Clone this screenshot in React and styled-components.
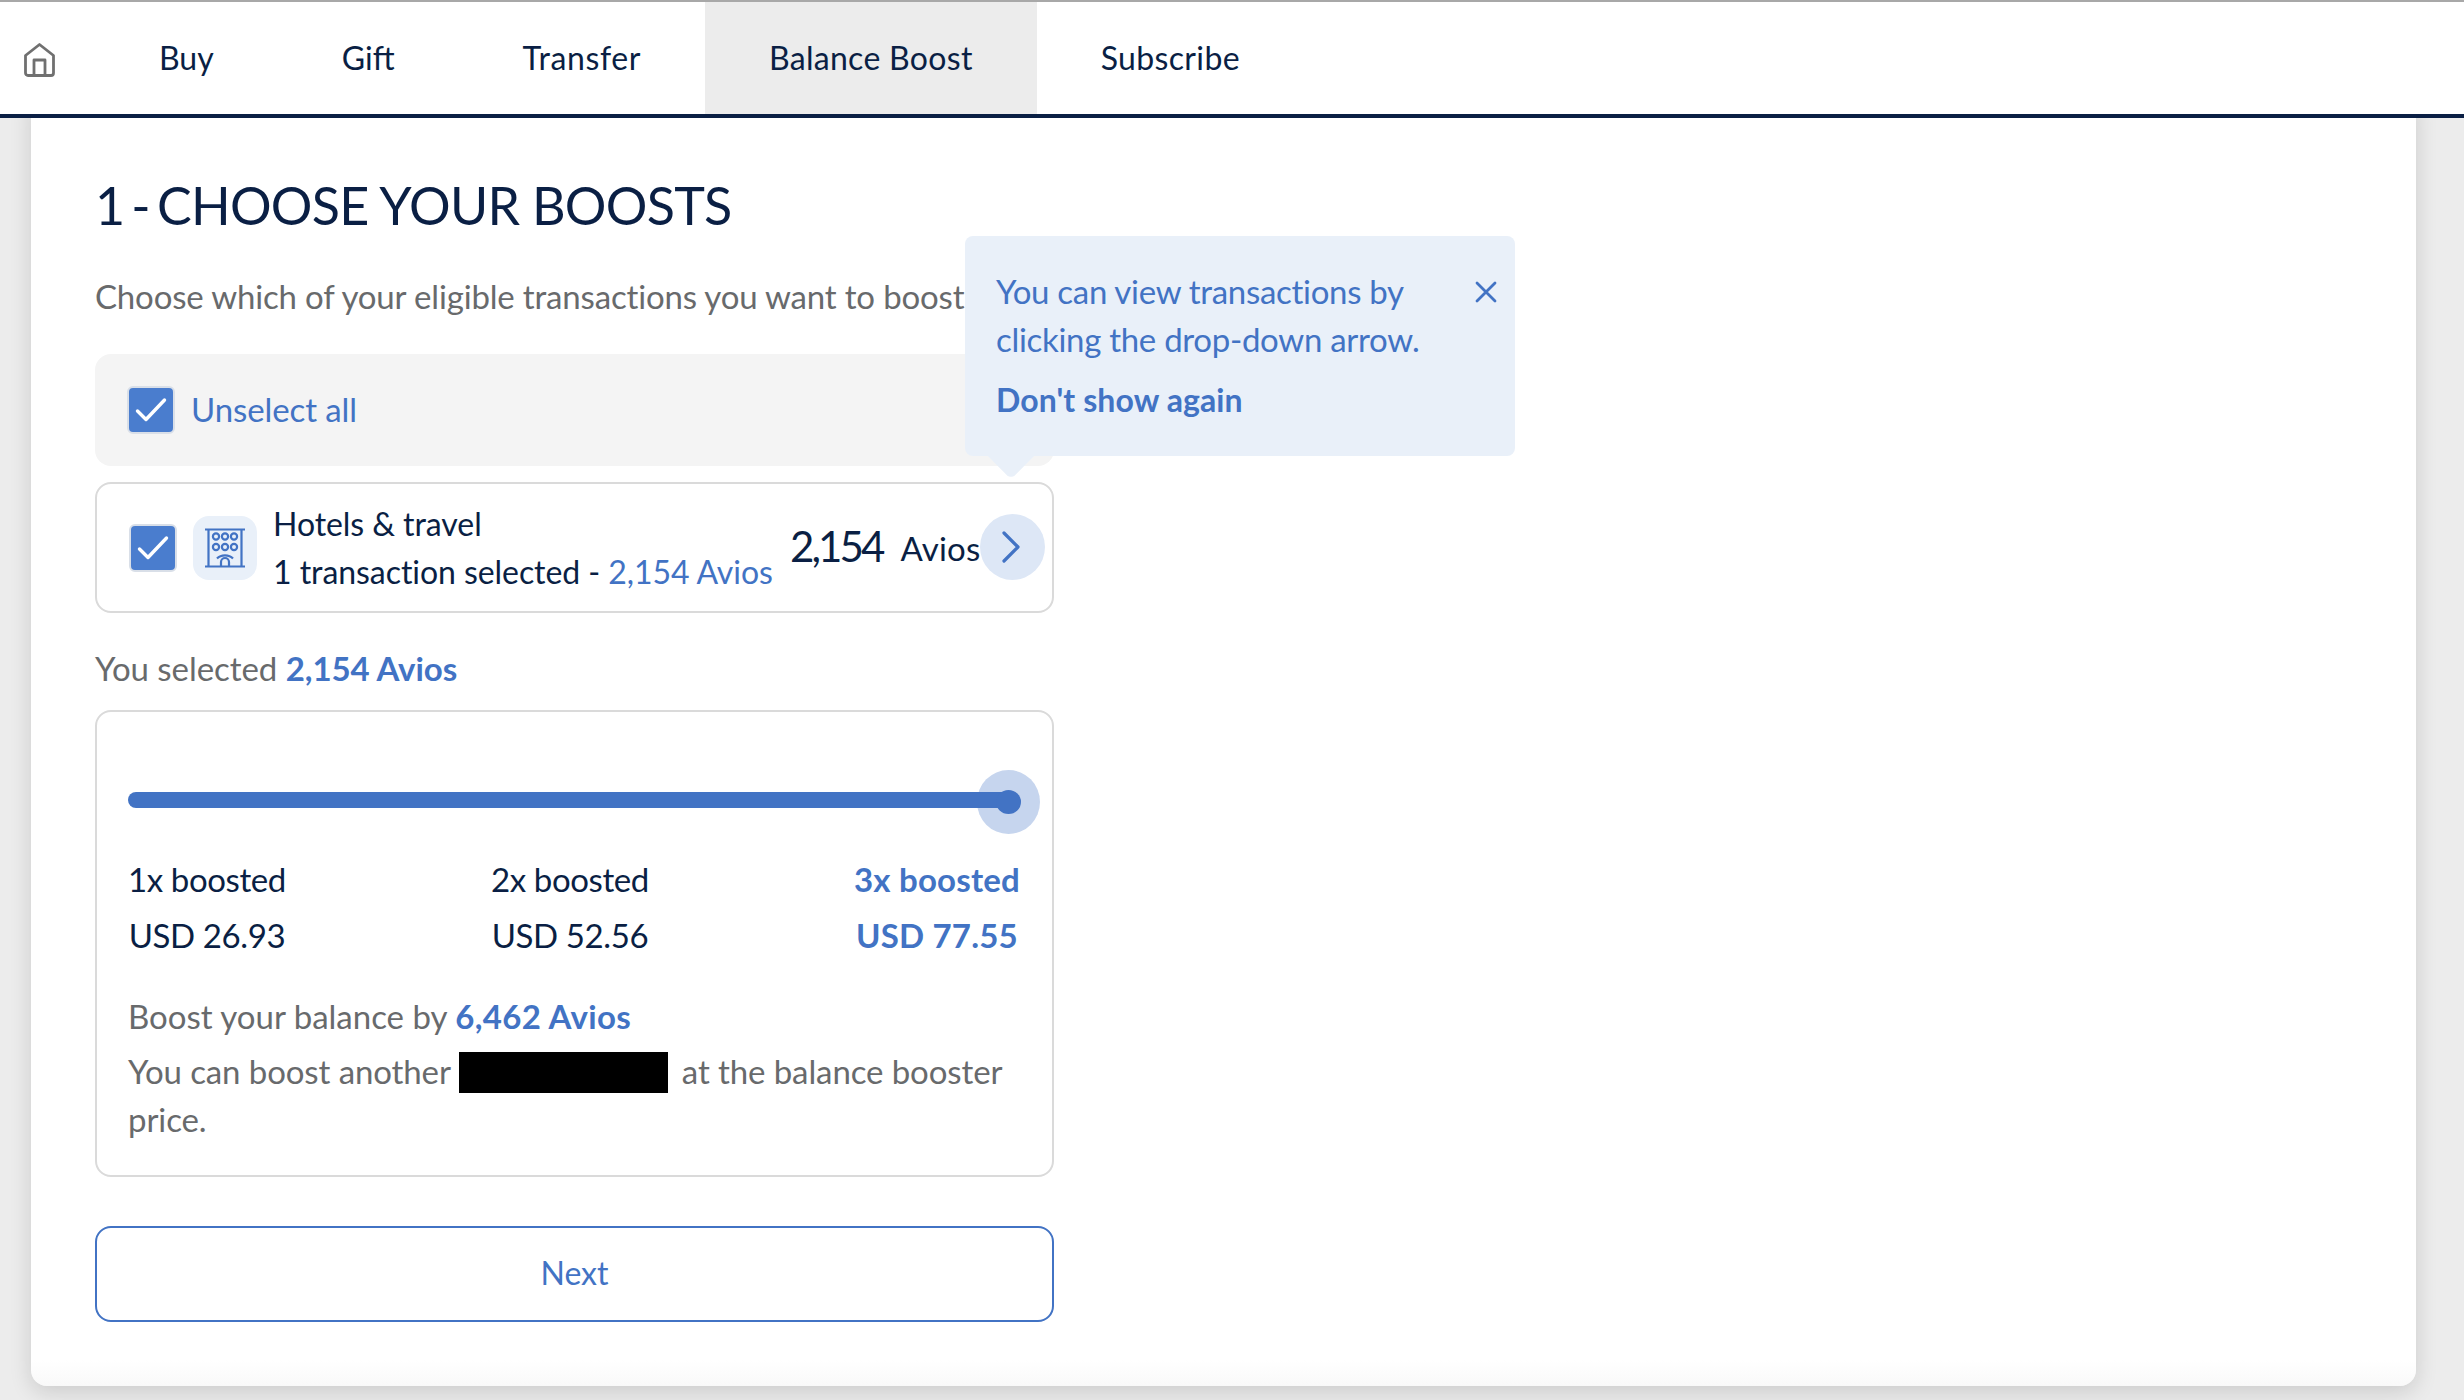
import React from "react";
import styled, { createGlobalStyle } from "styled-components";

const navy = "#0a1f44";
const blue = "#4273c4";
const grey = "#686a6c";

const Global = createGlobalStyle`
  html, body { margin: 0; padding: 0; background: #ececec; }
  * { box-sizing: border-box; }
  body { font-family: "Lato", "Open Sans", sans-serif; }
`;

const Page = styled.div`
  position: relative;
  width: 2464px;
  height: 1400px;
  overflow: hidden;
  background: #ececec;
`;
const Nav = styled.nav`
  position: relative;
  z-index: 2;
  height: 118px;
  display: flex;
  background: #fff;
  border-top: 2px solid #a8a8a8;
  border-bottom: 4px solid ${navy};
`;
const HomeTab = styled.a`
  width: 95px;
  padding: 41px 0 0 24px;
  color: #707070;
  line-height: 0;
`;
const Tab = styled.a`
  display: flex;
  align-items: center;
  height: 112px;
  padding: 0 64px 1px;
  font-size: 32px;
  letter-spacing: ${(p) => p.$ls || "0"};
  color: ${navy};
  background: ${(p) => (p.$active ? "#ececec" : "transparent")};
`;
const Card = styled.main`
  position: absolute;
  left: 31px;
  top: 100px;
  width: 2385px;
  height: 1286px;
  padding: 73px 64px 0;
  background: linear-gradient(#fff 1260px, #f9f9f9);
  border-radius: 0 0 16px 16px;
  box-shadow: 0 6px 22px rgba(0, 0, 0, 0.14);
`;
const Title = styled.h1`
  margin: 0;
  height: 64px;
  font-size: 52px;
  line-height: 64px;
  font-weight: 400;
  letter-spacing: -0.7px;
  color: ${navy};
  white-space: nowrap;
`;
const TitleStep = styled.span`
  word-spacing: -5.7px;
`;
const Lead = styled.p`
  margin: 37px 0 0;
  height: 48px;
  font-size: 33px;
  line-height: 45px;
  letter-spacing: -0.17px;
  color: ${grey};
  white-space: nowrap;
`;
const Column = styled.div`
  width: 959px;
`;
const SelectAll = styled.div`
  display: flex;
  align-items: center;
  height: 112px;
  margin-top: 32px;
  padding-left: 32px;
  background: #f4f4f4;
  border-radius: 16px;
`;
const SelectLabel = styled.span`
  margin-left: 16px;
  padding-bottom: 3px;
  font-size: 33px;
  letter-spacing: -0.1px;
  color: ${blue};
`;
const Check = styled.span`
  flex: none;
  display: flex;
  align-items: center;
  justify-content: center;
  width: 48px;
  height: 48px;
  background: #4a7dce;
  border: 2px solid #d9dfe8;
  border-radius: 6px;
  color: #fff;
`;
const Category = styled.div`
  position: relative;
  display: flex;
  align-items: center;
  height: 131px;
  margin-top: 16px;
  padding-left: 32px;
  background: #fff;
  border: 2px solid #dadada;
  border-radius: 16px;
`;
const IconTile = styled.span`
  flex: none;
  display: flex;
  align-items: center;
  justify-content: center;
  width: 64px;
  height: 64px;
  margin-left: 16px;
  background: #e9f0f9;
  border-radius: 16px;
  color: ${blue};
`;
const CategoryText = styled.div`
  margin-left: 16px;
  font-size: 32px;
  line-height: 48px;
  letter-spacing: -0.06px;
  color: ${navy};
  white-space: nowrap;
`;
const BlueText = styled.span`
  color: ${blue};
  font-weight: ${(p) => (p.$bold ? 700 : 400)};
  letter-spacing: ${(p) => p.$ls || "inherit"};
`;
const Amount = styled.div`
  position: absolute;
  left: 693px;
  top: 0;
  height: 127px;
  display: flex;
  align-items: center;
  color: ${navy};
`;
const AmountValue = styled.span`
  padding-bottom: 3px;
  font-size: 42px;
  letter-spacing: -2.9px;
`;
const AmountUnit = styled.span`
  margin-left: 18px;
  font-size: 33px;
  letter-spacing: 0.2px;
`;
const Chevron = styled.span`
  position: absolute;
  left: 883px;
  top: 30px;
  display: flex;
  align-items: center;
  justify-content: center;
  width: 65px;
  height: 66px;
  padding-right: 3px;
  background: #dde7f6;
  border-radius: 50%;
  color: ${blue};
`;
const Selected = styled.p`
  margin: 33px 0 0;
  height: 48px;
  font-size: 33px;
  line-height: 45px;
  letter-spacing: -0.05px;
  color: ${grey};
`;
const BoostBox = styled.section`
  height: 467px;
  margin-top: 16px;
  padding: 0 31px;
  background: #fff;
  border: 2px solid #dadada;
  border-radius: 16px;
`;
const Slider = styled.div`
  position: relative;
  height: 16px;
  margin-top: 80px;
  width: 882px;
`;
const Track = styled.div`
  position: absolute;
  inset: 0;
  background: ${blue};
  border-radius: 8px;
`;
const Halo = styled.span`
  position: absolute;
  right: -30px;
  top: -22px;
  width: 63px;
  height: 64px;
  background: #c6d5ee;
  border-radius: 50%;
`;
const Thumb = styled.span`
  position: absolute;
  right: -11px;
  top: -2px;
  width: 25px;
  height: 24px;
  background: ${blue};
  border-radius: 50%;
`;
const Tiers = styled.div`
  display: flex;
  justify-content: space-between;
  margin-top: 42.5px;
  width: 892px;
`;
const Tier = styled.div`
  text-align: center;
  font-size: 33px;
  line-height: 56px;
  letter-spacing: ${(p) => (p.$active ? "0.2px" : "-0.4px")};
  font-weight: ${(p) => (p.$active ? 700 : 400)};
  color: ${(p) => (p.$active ? blue : navy)};
  white-space: nowrap;
`;
const Note = styled.p`
  margin: ${(p) => p.$top || "0"} 0 0;
  font-size: 33px;
  line-height: 48px;
  letter-spacing: ${(p) => p.$ls || "-0.1px"};
  color: ${grey};
`;
const Redacted = styled.span`
  display: inline-block;
  width: 209px;
  height: 41px;
  margin: 0 14px 0 8px;
  vertical-align: -9px;
  background: #000;
`;
const NextButton = styled.button`
  display: block;
  width: 959px;
  height: 96px;
  margin-top: 49px;
  padding: 0 0 3px;
  font-family: inherit;
  font-size: 32px;
  color: ${blue};
  background: #fff;
  border: 2px solid ${blue};
  border-radius: 16px;
`;
const Tooltip = styled.aside`
  position: absolute;
  left: 965px;
  top: 236px;
  z-index: 3;
  width: 550px;
  height: 220px;
  padding: 31px 31px 0;
  background: #e9f0f9;
  border-radius: 8px;
  font-size: 33px;
  line-height: 48px;
  letter-spacing: -0.3px;
  color: ${blue};
  &::after {
    content: "";
    position: absolute;
    left: 28px;
    bottom: -17px;
    width: 36px;
    height: 36px;
    background: #e9f0f9;
    border-radius: 0 0 6px 0;
    transform: rotate(45deg) scale(0.95);
  }
`;
const Dismiss = styled.div`
  margin-top: 13px;
  font-size: 32px;
  font-weight: 700;
  letter-spacing: 0.1px;
`;
const Close = styled.span`
  position: absolute;
  left: 510px;
  top: 45px;
  line-height: 0;
`;

const HomeIcon = () => (
  <svg width="31" height="34" viewBox="0 0 31 34" fill="none" stroke="currentColor" strokeWidth="2.8" strokeLinejoin="round">
    <path d="M1.5 12.5 15.5 1.5l14 11v17.5a2.5 2.5 0 0 1-2.5 2.5H4a2.5 2.5 0 0 1-2.5-2.5z" />
    <path d="M10 32V17h11v15" />
  </svg>
);
const Tick = () => (
  <svg width="32" height="26" viewBox="0 0 32 26" fill="none" stroke="currentColor" strokeWidth="3.4" strokeLinecap="round" strokeLinejoin="round">
    <path d="M2.5 14 11 22.5 29.5 3" />
  </svg>
);
const Building = () => (
  <svg width="40" height="40" viewBox="0 0 40 40" fill="none" stroke="currentColor" strokeWidth="2.2">
    <path d="M0 1.5h40M0 38.5h40M3.5 1.5v37M36.5 1.5v37" />
    <circle cx="11" cy="8.5" r="3.1" />
    <circle cx="20" cy="8.5" r="3.1" />
    <circle cx="29" cy="8.5" r="3.1" />
    <circle cx="11" cy="19" r="3.1" />
    <circle cx="20" cy="19" r="3.1" />
    <circle cx="29" cy="19" r="3.1" />
    <path d="M12 30.5a10 8 0 0 1 16 0" />
    <path d="M16 38v-4a4 4 0 0 1 8 0v4" />
  </svg>
);
const ChevronIcon = () => (
  <svg width="20" height="32" viewBox="0 0 20 32" fill="none" stroke="currentColor" strokeWidth="3.2" strokeLinecap="round" strokeLinejoin="round">
    <path d="M3 2l14 14L3 30" />
  </svg>
);
const CloseIcon = () => (
  <svg width="22" height="22" viewBox="0 0 22 22" fill="none" stroke="currentColor" strokeWidth="2.8" strokeLinecap="round">
    <path d="M2 2l18 18M20 2 2 20" />
  </svg>
);

export default function App() {
  return (
    <Page>
      <Global />
      <Nav>
        <HomeTab><HomeIcon /></HomeTab>
        <Tab>Buy</Tab>
        <Tab>Gift</Tab>
        <Tab $ls="0.6px">Transfer</Tab>
        <Tab $active $ls="0.3px">Balance Boost</Tab>
        <Tab $ls="0.35px">Subscribe</Tab>
      </Nav>
      <Card>
        <Title><TitleStep>1 - </TitleStep>CHOOSE YOUR BOOSTS</Title>
        <Lead>Choose which of your eligible transactions you want to boost</Lead>
        <Column>
          <SelectAll>
            <Check><Tick /></Check>
            <SelectLabel>Unselect all</SelectLabel>
          </SelectAll>
          <Category>
            <Check><Tick /></Check>
            <IconTile><Building /></IconTile>
            <CategoryText>
              <div>Hotels &amp; travel</div>
              <div>1 transaction selected - <BlueText>2,154 Avios</BlueText></div>
            </CategoryText>
            <Amount>
              <AmountValue>2,154</AmountValue>
              <AmountUnit>Avios</AmountUnit>
            </Amount>
            <Chevron><ChevronIcon /></Chevron>
          </Category>
          <Selected>You selected <BlueText $bold>2,154 Avios</BlueText></Selected>
          <BoostBox>
            <Slider>
              <Halo />
              <Track />
              <Thumb />
            </Slider>
            <Tiers>
              <Tier><div>1x boosted</div><div>USD 26.93</div></Tier>
              <Tier><div>2x boosted</div><div>USD 52.56</div></Tier>
              <Tier $active><div>3x boosted</div><div>USD 77.55</div></Tier>
            </Tiers>
            <Note $top="29px" $ls="0px">Boost your balance by <BlueText $bold $ls="0.35px">6,462 Avios</BlueText></Note>
            <Note $top="7px">You can boost another<Redacted />at the balance booster<br />price.</Note>
          </BoostBox>
          <NextButton>Next</NextButton>
        </Column>
      </Card>
      <Tooltip>
        <div>You can view transactions by<br />clicking the drop-down arrow.</div>
        <Dismiss>Don't show again</Dismiss>
        <Close><CloseIcon /></Close>
      </Tooltip>
    </Page>
  );
}
